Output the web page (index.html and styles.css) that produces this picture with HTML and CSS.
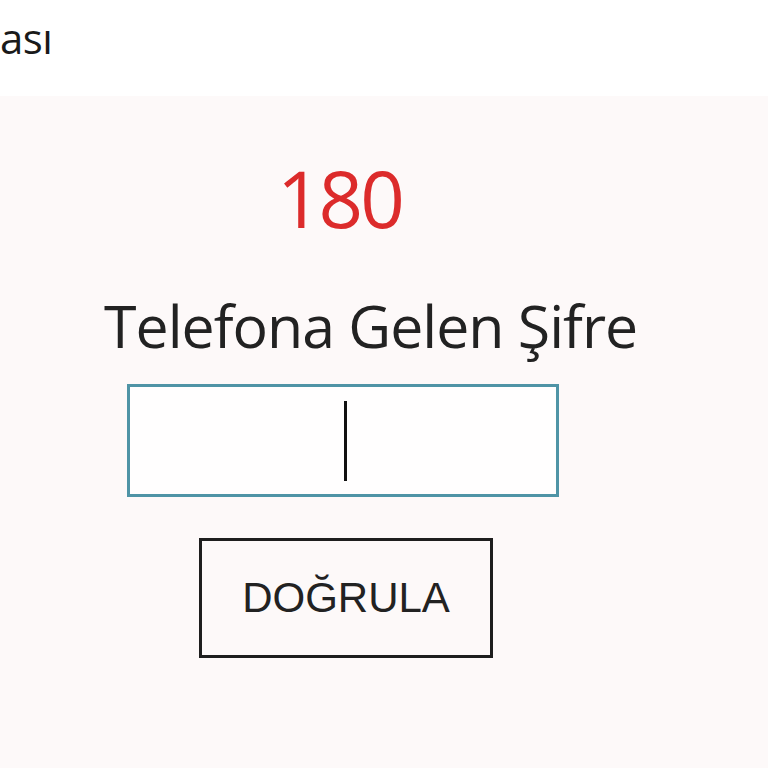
FILE: index.html
```html
<!DOCTYPE html>
<html lang="tr">
<head>
<meta charset="utf-8">
<title>Doğrulama</title>
<link rel="stylesheet" href="styles.css">
</head>
<body>
<div class="titlebar"><span class="title">ası</span></div>
<main class="content">
  <div class="counter">180</div>
  <div class="label">Telefona Gelen Şifre</div>
  <div class="input"><span class="caret"></span></div>
  <div class="button">DOĞRULA</div>
</main>
</body>
</html>
```
FILE: styles.css
```css
html, body {
  margin: 0;
  padding: 0;
  width: 768px;
  height: 768px;
  overflow: hidden;
  background: #fdf9f9;
  font-family: "Open Sans", "Noto Sans", sans-serif;
}
.titlebar {
  height: 96px;
  background: #ffffff;
  box-sizing: border-box;
  padding-top: 17px;
}
.title {
  display: block;
  font-size: 42px;
  line-height: 42px;
  color: #1a1a1a;
  margin-left: 0;
  letter-spacing: -0.5px;
}
.content {
  display: flex;
  flex-direction: column;
  align-items: flex-start;
  padding-top: 63px;
}
.counter {
  margin-left: 277px;
  font-size: 78px;
  line-height: 78px;
  letter-spacing: -3px;
  color: #dc2b2b;
}
.label {
  margin-top: 58px;
  margin-left: 104px;
  font-size: 59px;
  line-height: 60px;
  letter-spacing: -1px;
  color: #222222;
}
.input {
  margin-top: 29px;
  margin-left: 127px;
  width: 432px;
  height: 113px;
  box-sizing: border-box;
  border: 3px solid #4f94a6;
  background: #fffefe;
  display: flex;
  align-items: center;
  padding-left: 214px;
}
.caret {
  display: block;
  width: 3px;
  height: 80px;
  background: #111111;
}
.button {
  margin-top: 41px;
  margin-left: 199px;
  width: 294px;
  height: 120px;
  box-sizing: border-box;
  border: 3px solid #1e1e1e;
  display: flex;
  align-items: center;
  justify-content: center;
  font-family: "Liberation Sans", Arial, sans-serif;
  font-size: 42px;
  color: #222222;
}
```
